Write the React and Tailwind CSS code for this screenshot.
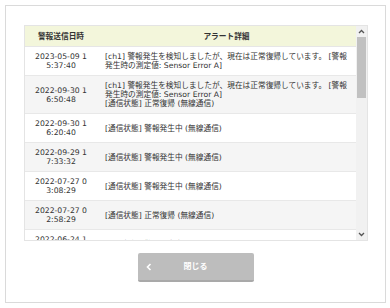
import React from "react";

const rows = [
  { d: "2023-05-09 15:37:40", t: ["[ch1] 警報発生を検知しましたが、現在は正常復帰しています。 [警報発生時の測定値: Sensor Error A]"] },
  { d: "2022-09-30 16:50:48", t: ["[ch1] 警報発生を検知しましたが、現在は正常復帰しています。 [警報発生時の測定値: Sensor Error A]", "[通信状態] 正常復帰 (無線通信)"] },
  { d: "2022-09-30 16:20:40", t: ["[通信状態] 警報発生中 (無線通信)"] },
  { d: "2022-09-29 17:33:32", t: ["[通信状態] 警報発生中 (無線通信)"] },
  { d: "2022-07-27 03:08:29", t: ["[通信状態] 警報発生中 (無線通信)"] },
  { d: "2022-07-27 02:58:29", t: ["[通信状態] 正常復帰 (無線通信)"] },
  { d: "2022-06-24 14:12:09", t: ["[通信状態] 警報発生中 (無線通信)"] },
];

export default function App() {
  return (
    <div
      className="w-[390px] h-[308px] bg-white p-[5px] text-[#333]"
      style={{ fontFamily: '"DejaVu Sans", "Noto Sans CJK JP", sans-serif' }}
    >
      <div className="w-[381px] h-[298px] border border-[#dadada] bg-white pt-[19px] flex flex-col">
        <div className="ml-[18px] w-[344px] h-[216px] border border-[#e4e4e4] flex">
          <div className="flex-1 overflow-hidden text-[7.7px] leading-[9px]">
            <div className="flex h-[21px] bg-[#f3f6db] border-b border-[#e6e6e6] font-bold items-center">
              <div className="w-[72px] text-center">警報送信日時</div>
              <div className="flex-1 text-center">アラート詳細</div>
            </div>
            {rows.map((r, i) => (
              <div
                key={i}
                className={`flex border-b border-[#e8e8e8] ${i % 2 === 1 ? "bg-[#f5f5f5]" : "bg-white"}`}
              >
                <div className="w-[72px] px-[9px] py-[5px] text-center break-all flex items-center justify-center">
                  <span>{r.d}</span>
                </div>
                <div className="flex-1 pl-[8px] pr-[4px] py-[5px] flex flex-col justify-center">
                  {r.t.map((s, j) => (
                    <div key={j}>{s}</div>
                  ))}
                </div>
              </div>
            ))}
          </div>
          <div className="w-[11px] bg-[#f1f1f1] flex flex-col items-center">
            <div className="h-[11px] w-full flex items-center justify-center">
              <svg width="7" height="5" viewBox="0 0 7 5">
                <path d="M1 4 L3.5 1.5 L6 4" fill="none" stroke="#555" strokeWidth="1.3" />
              </svg>
            </div>
            <div className="w-[9px] h-[61px] bg-[#c1c1c1]" />
            <div className="flex-1" />
            <div className="h-[11px] w-full flex items-center justify-center">
              <svg width="7" height="5" viewBox="0 0 7 5">
                <path d="M1 1 L3.5 3.5 L6 1" fill="none" stroke="#555" strokeWidth="1.3" />
              </svg>
            </div>
          </div>
        </div>
        <div className="flex justify-center mt-[12px]">
          <button className="w-[116px] h-[29px] bg-[#bdbdbd] border-b-2 border-[#a9a9a9] rounded-[2px] flex items-center text-white font-bold text-[8px] px-[8px]">
            <svg width="6" height="8" viewBox="0 0 6 8">
              <path d="M4.5 1 L1.5 4 L4.5 7" fill="none" stroke="#fff" strokeWidth="1.6" />
            </svg>
            <span className="flex-1 text-center pr-[6px]">閉じる</span>
          </button>
        </div>
      </div>
    </div>
  );
}
